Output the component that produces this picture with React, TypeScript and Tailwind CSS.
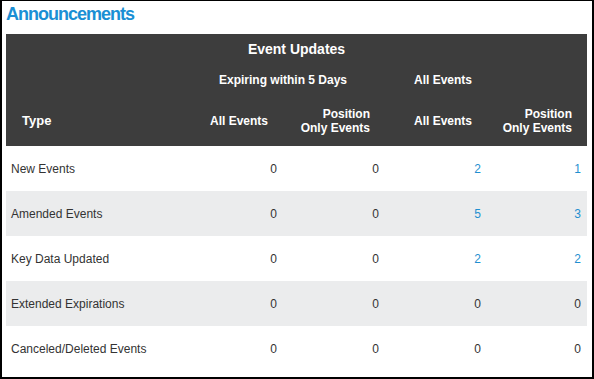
import React from "react";

const rows: { label: string; v: (number | { n: number; link: boolean })[] }[] = [
  { label: "New Events", v: [0, 0, { n: 2, link: true }, { n: 1, link: true }] },
  { label: "Amended Events", v: [0, 0, { n: 5, link: true }, { n: 3, link: true }] },
  { label: "Key Data Updated", v: [0, 0, { n: 2, link: true }, { n: 2, link: true }] },
  { label: "Extended Expirations", v: [0, 0, 0, 0] },
  { label: "Canceled/Deleted Events", v: [0, 0, 0, 0] },
];

const grid = "grid grid-cols-[175px_102px_102px_102px_100px]";

export default function App() {
  return (
    <div
      className="w-[594px] h-[379px] bg-white border-l-2 border-t border-r-2 border-b-2 border-black pl-[4px] overflow-hidden"
      style={{ fontFamily: '"Liberation Sans", Arial, sans-serif' }}
    >
      <div className="mt-[3px] h-[20px] leading-[20px] text-[18px] font-bold text-[#1a8fd4] tracking-[-1px]">
        Announcements
      </div>
      <div className="mt-[10px] w-[581px]">
        <div className="bg-[#3d3d3d] text-white font-bold">
          <div className="h-[30px] flex items-center justify-center text-[14px]">Event Updates</div>
          <div className={`${grid} h-[32px] items-center text-[12px]`}>
            <div />
            <div className="col-span-2 text-center">Expiring within 5 Days</div>
            <div className="text-right pr-[15px]">All Events</div>
            <div />
          </div>
          <div className={`${grid} h-[50px] items-center text-[12px] leading-[14px]`}>
            <div className="pl-[16px] text-[13px]">Type</div>
            <div className="text-right pr-[15px]">All Events</div>
            <div className="text-right pr-[15px]">
              Position
              <br />
              Only Events
            </div>
            <div className="text-right pr-[15px]">All Events</div>
            <div className="text-right pr-[15px]">
              Position
              <br />
              Only Events
            </div>
          </div>
        </div>
        {rows.map((r, i) => (
          <div
            key={r.label}
            className={`${grid} h-[45px] items-center text-[12px] text-[#333333] ${i % 2 === 1 ? "bg-[#ebeced]" : "bg-white"}`}
          >
            <div className="pl-[5px]">{r.label}</div>
            {r.v.map((c, j) => {
              const isLink = typeof c === "object";
              const n = typeof c === "object" ? c.n : c;
              return (
                <div key={j} className={`text-right pr-[6px] ${isLink ? "text-[#1f8fd0]" : ""}`}>
                  {n}
                </div>
              );
            })}
          </div>
        ))}
      </div>
    </div>
  );
}
